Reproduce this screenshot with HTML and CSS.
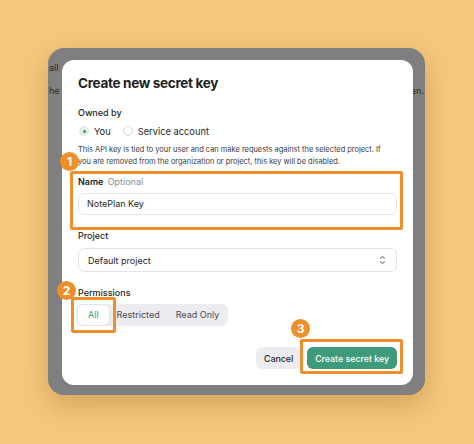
FILE: index.html
```html
<!DOCTYPE html>
<html lang="en">
<head>
<meta charset="utf-8">
<title>Create new secret key</title>
<link rel="stylesheet" href="styles.css">
</head>
<body>
<div class="frame">
  <span class="bg-text bt1">all</span>
  <span class="bg-text bt2">he</span>
  <span class="bg-text bt3">pen.</span>
  <div class="dialog">
    <h1 class="title">Create new secret key</h1>
    <div class="label">Owned by</div>
    <div class="radios">
      <label class="radio"><span class="dot checked"></span>You</label>
      <label class="radio"><span class="dot"></span>Service account</label>
    </div>
    <p class="desc">This API key is tied to your user and can make requests against the selected project. If you are removed from the organization or project, this key will be disabled.</p>
    <div class="field callout-host">
      <div class="ring ring1"></div>
      <span class="badge badge1">1</span>
      <div class="label">Name <span class="opt">Optional</span></div>
      <div class="input">NotePlan Key</div>
    </div>
    <div class="label project-label">Project</div>
    <div class="select">
      <span>Default project</span>
      <svg class="chev" width="7" height="10" viewBox="0 0 7 10"><path d="M1.5 3.5 L3.5 1.5 L5.5 3.5 M1.5 6.5 L3.5 8.5 L5.5 6.5" fill="none" stroke="#9a9aa0" stroke-width="1.1" stroke-linecap="round" stroke-linejoin="round"/></svg>
    </div>
    <div class="label perm-label">Permissions</div>
    <div class="segmented">
      <div class="seg-host callout-host">
        <span class="badge badge2">2</span>
        <span class="seg active">All</span>
        <div class="ring ring2"></div>
      </div>
      <span class="seg">Restricted</span>
      <span class="seg">Read Only</span>
    </div>
    <div class="actions">
      <button class="btn cancel">Cancel</button>
      <div class="callout-host">
        <span class="badge badge3">3</span>
        <button class="btn create">Create secret key</button>
        <div class="ring ring3"></div>
      </div>
    </div>
  </div>
</div>
</body>
</html>
```

FILE: styles.css
```css
html, body {
  margin: 0;
  padding: 0;
}
body {
  width: 474px;
  height: 444px;
  background: #f6c77f;
  font-family: Inter, "Noto Sans", sans-serif;
  color: #1f1f22;
  overflow: hidden;
}
.frame {
  position: relative;
  margin: 48px 0 0 48px;
  width: 377px;
  height: 347px;
  box-sizing: border-box;
  padding: 12px 12px 10px 14px;
  background: #7f7f7f;
  border-radius: 16px;
  box-shadow: 0 10px 28px rgba(150, 95, 20, 0.35);
  overflow: hidden;
}
.bg-text {
  position: absolute;
  font-size: 9px;
  color: #2a2a2a;
  line-height: 12px;
}
.bt1 { left: 1px; top: 14px; }
.bt2 { left: 1px; top: 37px; }
.bt3 { right: 1px; top: 37px; }
.dialog {
  position: relative;
  height: 100%;
  box-sizing: border-box;
  background: #fff;
  border-radius: 12px;
  padding: 12px 16px 15px 16px;
}
.title {
  margin: 0;
  font-size: 13.6px;
  line-height: 22px;
  font-weight: 700;
  letter-spacing: -0.35px;
}
.label {
  margin-top: 12px;
  font-size: 9px;
  line-height: 14px;
  font-weight: 500;
}
.radios {
  margin-top: 3px;
  height: 16px;
  display: flex;
  align-items: center;
  gap: 11px;
  font-size: 9.3px;
}
.radio {
  display: flex;
  align-items: center;
  gap: 5px;
  color: #2a2a2e;
}
.dot {
  width: 10px;
  height: 10px;
  border-radius: 50%;
  border: 1px solid #d9d9de;
  background: #fff;
  box-sizing: border-box;
  margin-left: 1px;
}
.dot.checked {
  background: #e5f0ea;
  border-color: #dfeae4;
  position: relative;
}
.dot.checked::after {
  content: "";
  position: absolute;
  left: 2.5px;
  top: 2.5px;
  width: 3px;
  height: 3px;
  border-radius: 50%;
  background: #3a9a78;
}
.desc {
  margin: 5px 0 0;
  padding-right: 8px;
  font-size: 7.45px;
  line-height: 12px;
  color: #3a3a3e;
}
.callout-host {
  position: relative;
}
.ring {
  position: absolute;
  border: 3.5px solid #ef8f2c;
  border-radius: 2px;
  pointer-events: none;
}
.ring1 { left: -8px; right: -6px; top: -4px; bottom: -15px; }
.ring2 { left: -7px; right: -7px; top: -8px; bottom: -8px; }
.ring3 { left: -7px; right: -6px; top: -8px; bottom: -5px; }
.badge {
  position: absolute;
  z-index: 2;
  width: 19px;
  height: 19px;
  border-radius: 50%;
  background: #ef8f2c;
  color: #fff;
  font-size: 12px;
  font-weight: 700;
  line-height: 19px;
  text-align: center;
}
.badge1 { left: -18px; top: -23px; }
.badge2 { left: -21px; top: -24px; }
.badge3 { left: -16px; top: -28px; }
.field {
  margin-top: 7px;
}
.field .label {
  margin-top: 0;
  font-weight: 600;
}
.opt {
  font-weight: 400;
  color: #8e8e99;
  margin-left: 2px;
}
.input {
  margin-top: 4px;
  height: 22px;
  box-sizing: border-box;
  border: 1px solid #e6e6ea;
  border-radius: 6px;
  padding: 0 8px;
  font-size: 9px;
  line-height: 20px;
}
.project-label {
  margin-top: 14px;
}
.select {
  margin-top: 5px;
  height: 24px;
  box-sizing: border-box;
  border: 1px solid #e6e6ea;
  border-radius: 6px;
  padding: 0 10px 0 9px;
  display: flex;
  align-items: center;
  justify-content: space-between;
  font-size: 9px;
}
.perm-label {
  margin-top: 14px;
}
.segmented {
  margin: 4px 0 0 -2px;
  display: inline-flex;
  align-items: center;
  height: 22px;
  box-sizing: border-box;
  padding: 0 1px 0 2px;
  background: #ececf1;
  border-radius: 6px;
}
.seg-host {
  display: flex;
}
.seg {
  display: block;
  padding: 0 8px;
  font-size: 9px;
  line-height: 20px;
  color: #4a4a52;
}
.seg.active {
  background: #fff;
  color: #3a9a78;
  border-radius: 5px;
  padding: 0 10px;
  box-shadow: 0 0 0 1px #e4e4ea;
}
.actions {
  margin-top: 21px;
  display: flex;
  justify-content: flex-end;
  gap: 6px;
}
.btn {
  font-family: inherit;
  border: none;
  height: 22px;
  border-radius: 6px;
  font-size: 8.8px;
  font-weight: 500;
  padding: 0 8px;
  margin: 0;
}
.cancel {
  background: #ececf1;
  color: #26262b;
}
.create {
  display: block;
  background: #3e9a7c;
  color: #fff;
  padding: 0 8px;
}
```
